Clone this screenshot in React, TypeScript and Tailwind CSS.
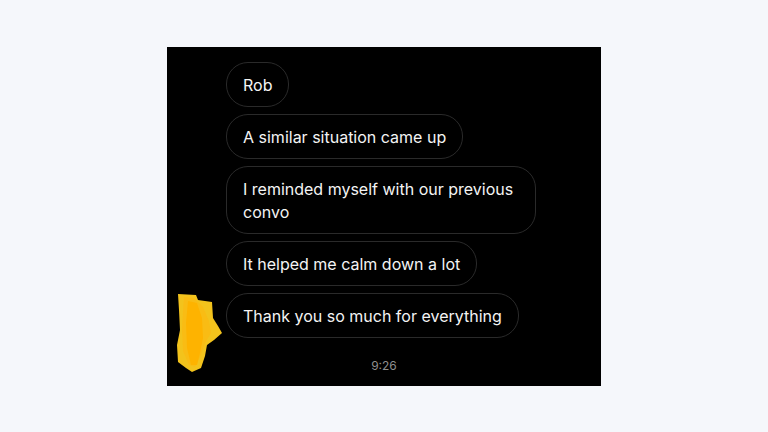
import React from 'react';

const messages = [
  'Rob',
  'A similar situation came up',
  'I reminded myself with our previous convo',
  'It helped me calm down a lot',
  'Thank you so much for everything',
];

const Scribble: React.FC = () => (
  <svg
    width="60"
    height="82"
    viewBox="0 0 60 82"
    className="absolute left-0 top-0 overflow-visible"
  >
    <polygon
      points="11,1 29,2 31,7 45,9 46,25 51,33 55,40 47,47 40,52 38,63 34,75 25,79 19,75 11,69 10,52 13,37 12,17"
      fill="#f3c31c"
    />
    <polygon
      points="17,4 27,5 36,14 42,28 44,40 38,50 33,64 28,74 22,72 16,58 15,36 16,18"
      fill="#f9bc14"
    />
    <polygon
      points="21,8 30,10 35,25 36,45 33,60 30,72 24,72 20,55 19,30"
      fill="#feb300"
    />
  </svg>
);

export default function App() {
  return (
    <div
      className="flex h-[432px] w-[768px] items-center justify-center bg-[#f5f7fb]"
      style={{ fontFamily: 'Inter, "Noto Sans", sans-serif' }}
    >
      <div className="flex h-[339px] w-[434px] flex-col bg-black pt-[15px]">
        <div className="flex flex-col gap-[7px]">
          {messages.map((m, i) => (
            <div key={i} className="flex">
              <div className="relative w-[59px] shrink-0">
                {i === messages.length - 1 && <Scribble />}
              </div>
              <div className="max-w-[310px] rounded-[22px] border border-[#2a2a2a] px-[16px] pb-[9px] pt-[11px] text-[16px] leading-[23px] text-[#f4f4f4]">
                {m}
              </div>
            </div>
          ))}
        </div>
        <div className="mt-[20px] text-center text-[12px] leading-[16px] text-[#8e8e8e]">
          9:26
        </div>
      </div>
    </div>
  );
}
